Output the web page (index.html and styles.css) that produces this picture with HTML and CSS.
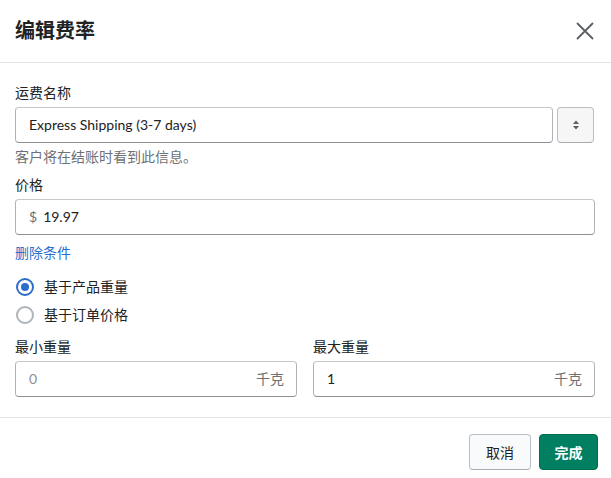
FILE: index.html
```html
<!DOCTYPE html>
<html lang="zh">
<head>
<meta charset="utf-8">
<link rel="stylesheet" href="styles.css">
</head>
<body>
<div class="modal">
  <div class="header">
    <h1 class="title">编辑费率</h1>
    <button class="close" aria-label="关闭">
      <svg width="18" height="18" viewBox="0 0 18 18"><path d="M1.5 1.5 L16.5 16.5 M16.5 1.5 L1.5 16.5" stroke="#5c5f62" stroke-width="1.8" stroke-linecap="round"/></svg>
    </button>
  </div>
  <div class="body">
    <div class="label">运费名称</div>
    <div class="combo">
      <div class="input grow"><span class="val">Express Shipping (3-7 days)</span></div>
      <button class="stepper">
        <svg width="8" height="12" viewBox="0 0 8 12"><path d="M4 1.5 L7 5 L1 5 Z M4 10.5 L7 7 L1 7 Z" fill="#5c5f62"/></svg>
      </button>
    </div>
    <div class="help">客户将在结账时看到此信息。</div>
    <div class="label mt8">价格</div>
    <div class="input"><span class="prefix">$</span><span class="val">19.97</span></div>
    <a class="link" href="#">删除条件</a>
    <div class="radios">
      <div class="radio-row"><span class="radio checked"></span><span>基于产品重量</span></div>
      <div class="radio-row"><span class="radio"></span><span>基于订单价格</span></div>
    </div>
    <div class="pair">
      <div class="field">
        <div class="label">最小重量</div>
        <div class="input"><span class="val muted grow">0</span><span class="suffix">千克</span></div>
      </div>
      <div class="field">
        <div class="label">最大重量</div>
        <div class="input"><span class="val grow">1</span><span class="suffix">千克</span></div>
      </div>
    </div>
  </div>
  <div class="footer">
    <button class="btn">取消</button>
    <button class="btn primary">完成</button>
  </div>
</div>
</body>
</html>
```
FILE: styles.css
```css
* { box-sizing: border-box; }
html, body { margin: 0; padding: 0; background: #fff; }
body {
  font-family: Lato, "Noto Sans CJK SC", sans-serif;
  font-size: 14px;
  line-height: 20px;
  color: #202223;
}
.modal { width: 611px; }
.header {
  height: 63px;
  border-bottom: 1px solid #e1e3e5;
  display: flex;
  align-items: center;
  justify-content: space-between;
  padding: 0 16px 0 15px;
}
.title {
  margin: 0;
  font-size: 20px;
  font-weight: 700;
  line-height: 28px;
  font-family: "Noto Sans CJK SC", sans-serif;
  color: #202223;
  padding-bottom: 2px;
}
.close {
  border: 0;
  background: none;
  padding: 0;
  width: 18px;
  height: 18px;
  margin-right: 1px;
  display: flex;
}
.body {
  padding: 20px 16px 20px 15px;
  display: flex;
  flex-direction: column;
}
.label { line-height: 20px; margin-bottom: 4px; }
.mt8 { margin-top: 8px; }
.combo { display: flex; gap: 4px; }
.grow { flex: 1; }
.input {
  height: 36px;
  border: 1px solid #aeb4b9;
  border-top-color: #c4c8cc;
  border-bottom-color: #8c9196;
  border-radius: 4px;
  display: flex;
  align-items: center;
  padding: 0 12px 0 13px;
  background: #fff;
}
.val { color: #202223; }
.muted { color: #8c9196; }
.prefix { color: #6d7175; margin-right: 6px; }
.suffix { color: #6d7175; }
.stepper {
  width: 37px;
  height: 36px;
  border: 1px solid #babfc3;
  border-bottom-color: #a8acb0;
  border-radius: 4px;
  background: #f6f6f7;
  display: flex;
  align-items: center;
  justify-content: center;
  padding: 0;
  margin-right: 1px;
}
.help { margin-top: 4px; color: #6d7175; }
.link {
  margin-top: 8px;
  color: #2c6ecb;
  text-decoration: none;
  align-self: flex-start;
}
.radios {
  margin-top: 14px;
  display: flex;
  flex-direction: column;
  gap: 8px;
}
.radio-row {
  display: flex;
  align-items: center;
  gap: 10px;
  padding-left: 1px;
  height: 20px;
}
.radio {
  width: 18px;
  height: 18px;
  border-radius: 50%;
  border: 2px solid #aeb4b9;
  display: flex;
  align-items: center;
  justify-content: center;
}
.radio.checked { border-color: #2c6ecb; }
.radio.checked::after {
  content: "";
  width: 8px;
  height: 8px;
  border-radius: 50%;
  background: #2c6ecb;
}
.pair {
  margin-top: 12px;
  display: grid;
  grid-template-columns: 1fr 1fr;
  gap: 16px;
}
.field { display: flex; flex-direction: column; }
.footer {
  border-top: 1px solid #e1e3e5;
  display: flex;
  justify-content: flex-end;
  gap: 8px;
  padding: 16px 13px 8px 16px;
}
.btn {
  height: 36px;
  padding: 0;
  border-radius: 4px;
  border: 1px solid #babfc3;
  border-bottom-color: #a8acb0;
  background: #f9fafb;
  color: #202223;
  font-family: "Noto Sans CJK SC", sans-serif;
  font-size: 14px;
  width: 62px;
}
.btn.primary {
  background: #008060;
  border-color: #006e52;
  color: #fff;
  font-weight: 600;
  width: 59px;
}
```
